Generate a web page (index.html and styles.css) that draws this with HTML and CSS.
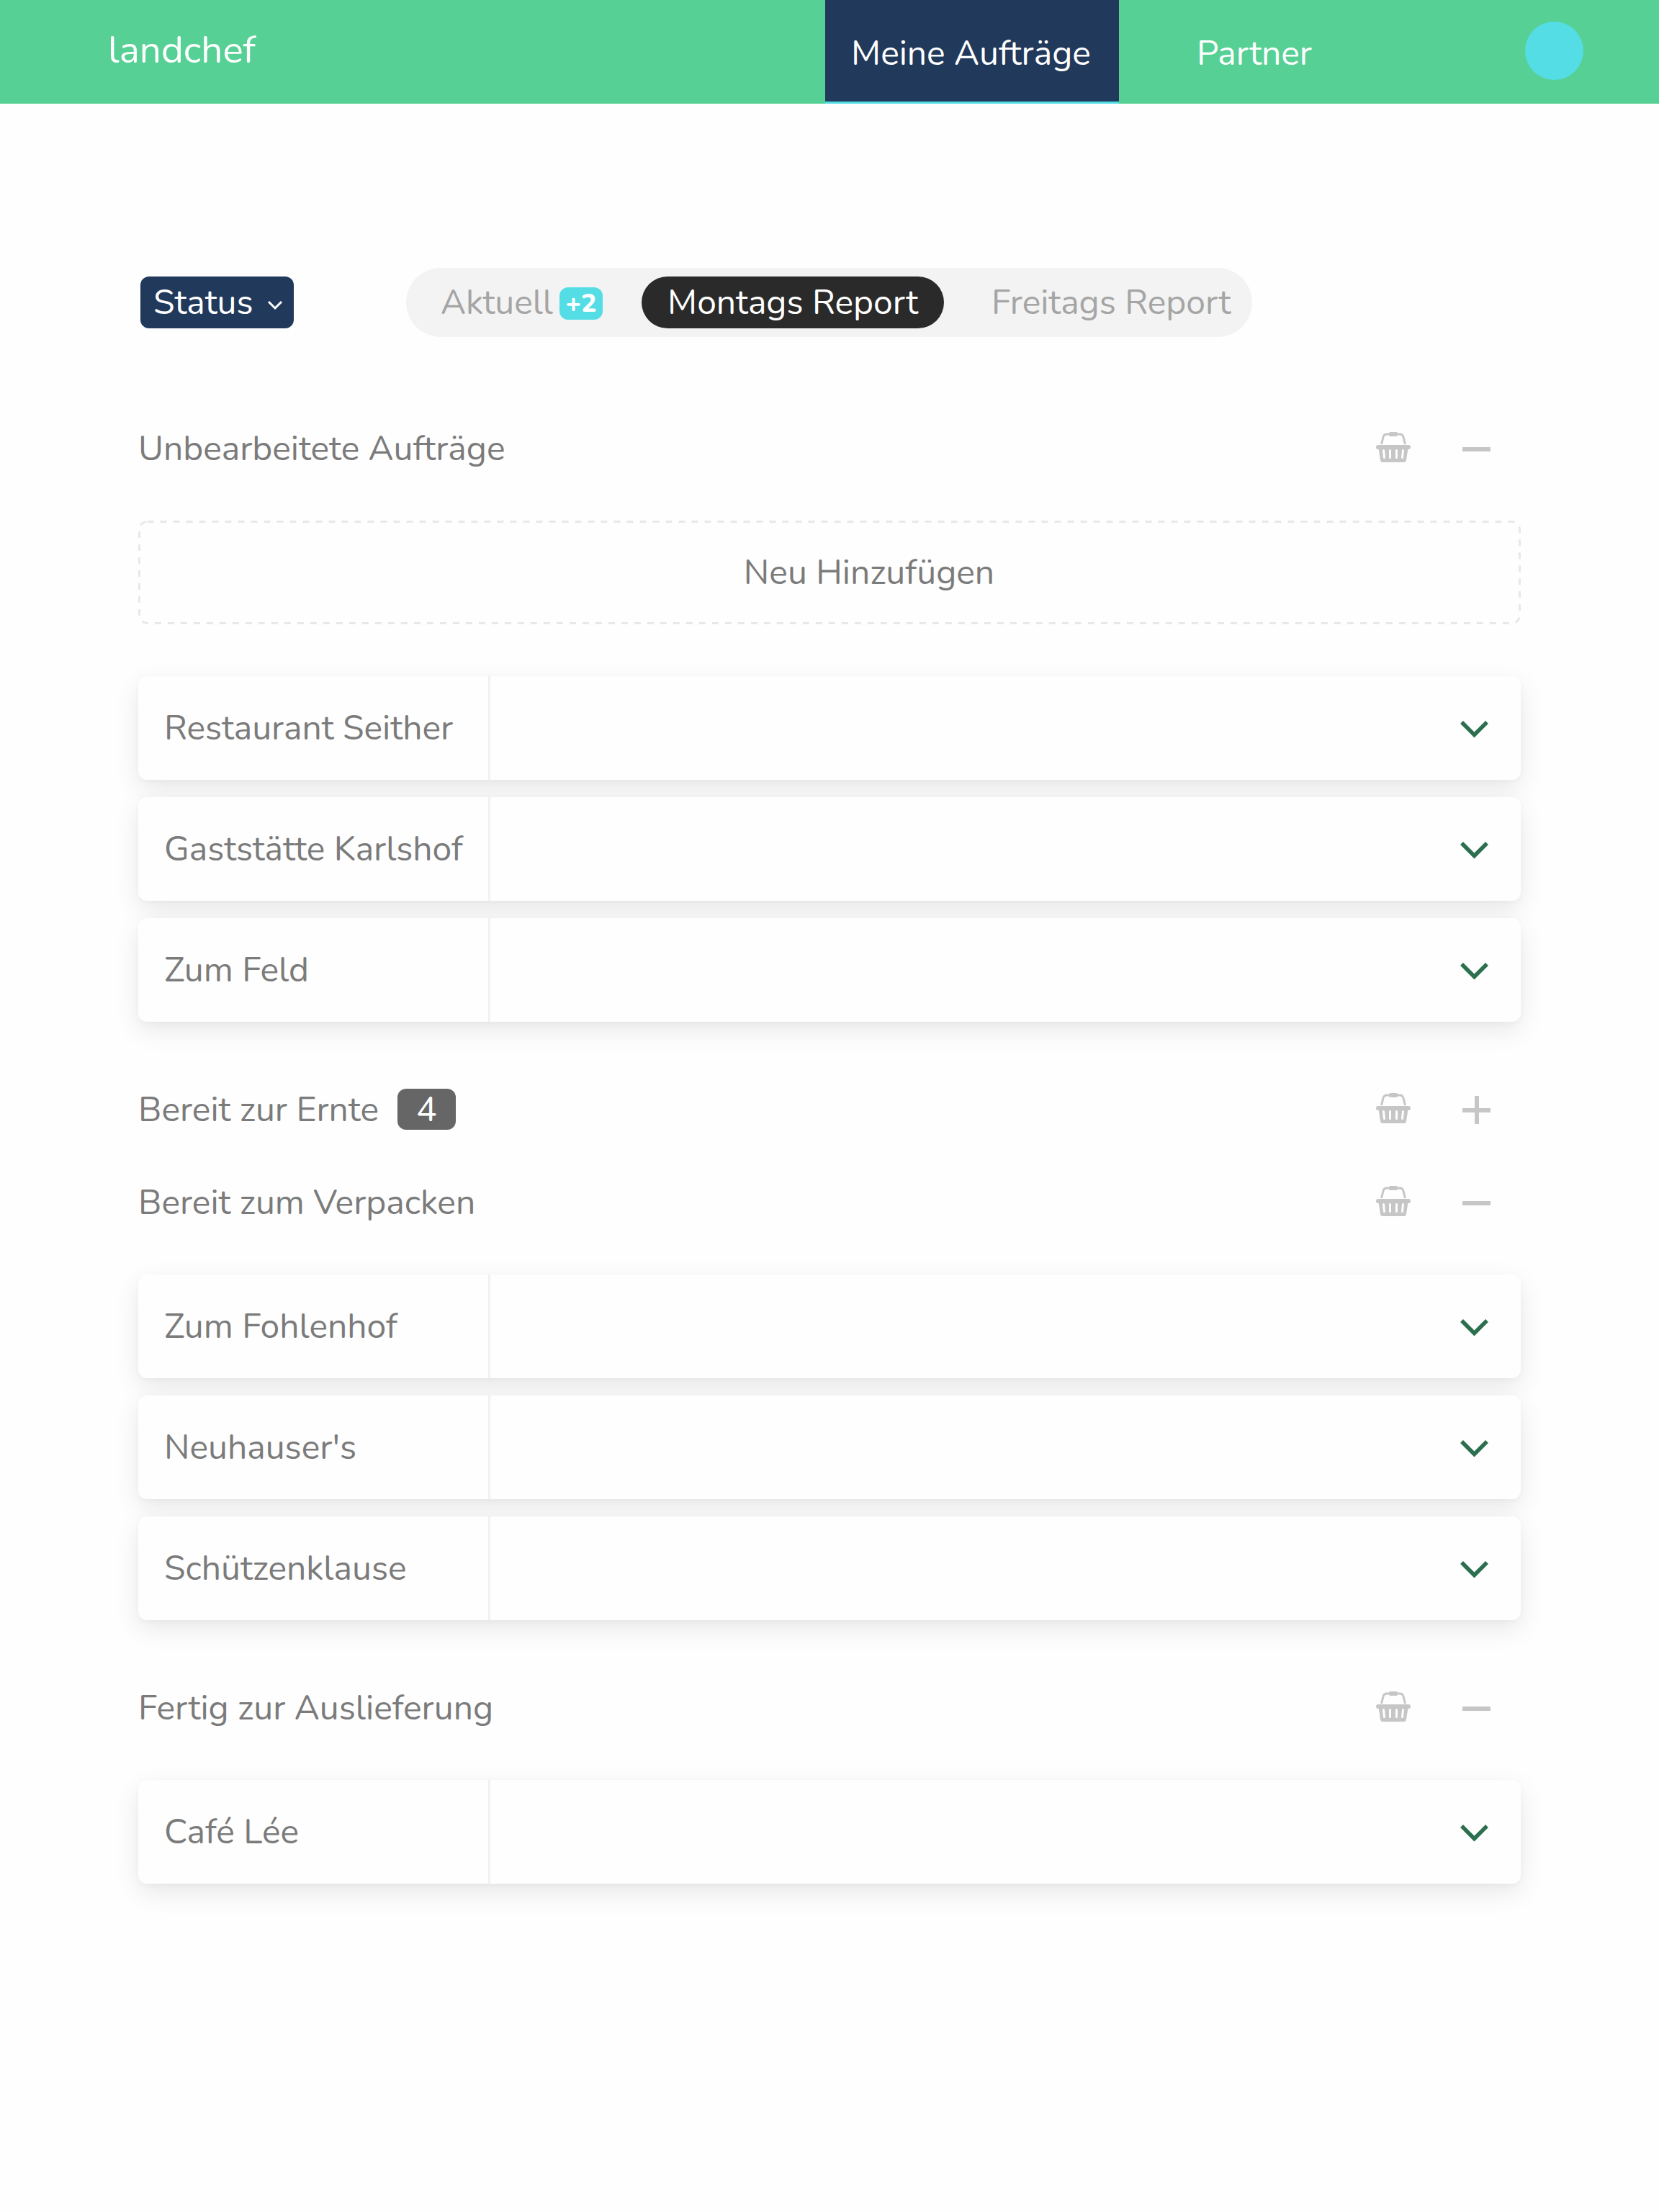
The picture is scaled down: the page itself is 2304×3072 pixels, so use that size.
FILE: index.html
```html
<!DOCTYPE html>
<html lang="de">
<head>
<meta charset="utf-8">
<meta name="viewport" content="width=device-width, initial-scale=1">
<title>landchef – Meine Aufträge</title>
<link rel="stylesheet" href="styles.css">
</head>
<body>
<svg class="sprite" aria-hidden="true">
  <symbol id="basket" viewBox="0 0 48 45">
    <path d="M7.500 17 10 7Q11 3 15 3H33Q37 3 38 7L40.500 17" fill="none" stroke="currentColor" stroke-width="3"/>
    <rect x="18" y="0" width="12" height="6" rx="2" fill="currentColor"/>
    <path fill="currentColor" fill-rule="evenodd" d="M3 18H45A3 3 0 0 1 45 24H44.300L42 39Q41.500 42 39 42H9Q6.500 42 6 39L3.700 24H3A3 3 0 0 1 3 18ZM9 25.500 10 35.500A1.500 1.500 0 0 0 13 35.500L12 25.500A1.500 1.500 0 0 0 9 25.500ZM18 25.500V35.500A1.500 1.500 0 0 0 21 35.500V25.500A1.500 1.500 0 0 0 18 25.500ZM27 25.500V35.500A1.500 1.500 0 0 0 30 35.500V25.500A1.500 1.500 0 0 0 27 25.500ZM36 25.500 35 35.500A1.500 1.500 0 0 0 38 35.500L39 25.500A1.500 1.500 0 0 0 36 25.500Z"/>
  </symbol>
  <symbol id="minus" viewBox="0 0 39 45"><path d="M0 21H39V27H0Z" fill="currentColor"/></symbol>
  <symbol id="plus" viewBox="0 0 39 45"><path d="M0 21H17V4H23V21H39V27H23V43H17V27H0Z" fill="currentColor"/></symbol>
  <symbol id="chevron" viewBox="0 0 39 24"><path d="M2 2 19.500 19.500 37 2" fill="none" stroke="currentColor" stroke-width="5.500"/></symbol>
</svg>

<header class="topbar">
  <a class="brand" href="#">landchef</a>
  <nav class="nav" aria-label="Hauptnavigation">
    <a class="nav-link is-active" href="#" aria-current="page">Meine Aufträge</a>
    <a class="nav-link" href="#">Partner</a>
  </nav>
  <button class="avatar" type="button" aria-label="Profil"></button>
</header>

<main class="page">
  <div class="toolbar">
    <div class="status">
      <select class="status-select" aria-label="Status"><option>Status</option></select>
      <svg class="status-icon" viewBox="0 0 22 14" aria-hidden="true"><path d="M2 2 11 11 20 2" fill="none" stroke="currentColor" stroke-width="3"/></svg>
    </div>
    <div class="segments">
      <button class="segment" type="button">Aktuell <span class="new-count">+2</span></button>
      <button class="segment is-selected" type="button" aria-pressed="true">Montags Report</button>
      <button class="segment" type="button">Freitags Report</button>
    </div>
  </div>

  <section class="group">
    <div class="group-head">
      <h2 class="group-title">Unbearbeitete Aufträge</h2>
      <button class="icon-button" type="button" aria-label="Korb"><svg class="basket"><use href="#basket"/></svg></button>
      <button class="icon-button" type="button" aria-label="Zuklappen"><svg class="toggle"><use href="#minus"/></svg></button>
    </div>
    <div class="group-body">
      <button class="add" type="button">
        <svg class="add-outline" aria-hidden="true"><rect class="add-rect" rx="11"/></svg>
        <span class="add-label">Neu Hinzufügen</span>
      </button>
      <ul class="orders">
        <li class="order"><span class="order-name">Restaurant Seither</span><button class="expand" type="button" aria-label="Restaurant Seither öffnen"><svg class="chevron"><use href="#chevron"/></svg></button></li>
        <li class="order"><span class="order-name">Gaststätte Karlshof</span><button class="expand" type="button" aria-label="Gaststätte Karlshof öffnen"><svg class="chevron"><use href="#chevron"/></svg></button></li>
        <li class="order"><span class="order-name">Zum Feld</span><button class="expand" type="button" aria-label="Zum Feld öffnen"><svg class="chevron"><use href="#chevron"/></svg></button></li>
      </ul>
    </div>
  </section>

  <section class="group is-collapsed">
    <div class="group-head">
      <h2 class="group-title">Bereit zur Ernte</h2>
      <span class="count">4</span>
      <button class="icon-button" type="button" aria-label="Korb"><svg class="basket"><use href="#basket"/></svg></button>
      <button class="icon-button" type="button" aria-label="Aufklappen"><svg class="toggle"><use href="#plus"/></svg></button>
    </div>
  </section>

  <section class="group">
    <div class="group-head">
      <h2 class="group-title">Bereit zum Verpacken</h2>
      <button class="icon-button" type="button" aria-label="Korb"><svg class="basket"><use href="#basket"/></svg></button>
      <button class="icon-button" type="button" aria-label="Zuklappen"><svg class="toggle"><use href="#minus"/></svg></button>
    </div>
    <div class="group-body">
      <ul class="orders">
        <li class="order"><span class="order-name">Zum Fohlenhof</span><button class="expand" type="button" aria-label="Zum Fohlenhof öffnen"><svg class="chevron"><use href="#chevron"/></svg></button></li>
        <li class="order"><span class="order-name">Neuhauser's</span><button class="expand" type="button" aria-label="Neuhauser's öffnen"><svg class="chevron"><use href="#chevron"/></svg></button></li>
        <li class="order"><span class="order-name">Schützenklause</span><button class="expand" type="button" aria-label="Schützenklause öffnen"><svg class="chevron"><use href="#chevron"/></svg></button></li>
      </ul>
    </div>
  </section>

  <section class="group">
    <div class="group-head">
      <h2 class="group-title">Fertig zur Auslieferung</h2>
      <button class="icon-button" type="button" aria-label="Korb"><svg class="basket"><use href="#basket"/></svg></button>
      <button class="icon-button" type="button" aria-label="Zuklappen"><svg class="toggle"><use href="#minus"/></svg></button>
    </div>
    <div class="group-body">
      <ul class="orders">
        <li class="order"><span class="order-name">Café Lée</span><button class="expand" type="button" aria-label="Café Lée öffnen"><svg class="chevron"><use href="#chevron"/></svg></button></li>
      </ul>
    </div>
  </section>
</main>
</body>
</html>
```
FILE: styles.css
```css
:root {
  --green: #56d094;
  --navy: #21395b;
  --cyan: #55dde6;
  --text: #7b7b7b;
  --icon: #c6c6c6;
}

* { box-sizing: border-box; }

body {
  margin: 0;
  background: #fefefe;
  color: var(--text);
  font: 400 48px/58px Nunito, Lato, sans-serif;
}

button, select {
  margin: 0;
  padding: 0;
  border: 0;
  background: none;
  color: inherit;
  font: inherit;
  cursor: pointer;
}

a { color: inherit; text-decoration: none; }

svg { display: block; }

.sprite { position: absolute; width: 0; height: 0; }

/* Top bar */
.topbar {
  display: flex;
  align-items: center;
  height: 144px;
  padding: 0 105px 0 150px;
  background: var(--green);
  color: #fff;
}

.brand { font-size: 53px; padding-bottom: 4px; }

.nav {
  display: flex;
  gap: 72px;
  align-self: stretch;
  margin-left: auto;
  margin-right: 260px;
}

.nav-link {
  display: flex;
  align-items: center;
  padding: 3px 36px 0;
}

.nav-link.is-active {
  min-width: 408px;
  background: var(--navy);
  box-shadow: inset 0 -3px var(--cyan);
}

.avatar {
  width: 81px;
  height: 81px;
  margin-bottom: 3px;
  border-radius: 50%;
  background: var(--cyan);
}

/* Filters */
.page { padding: 228px 192px; }

.toolbar {
  display: flex;
  align-items: center;
  gap: 156px;
  padding-left: 3px;
}

.status {
  display: grid;
  align-items: center;
  color: #fff;
}

.status-select {
  grid-area: 1 / 1;
  appearance: none;
  width: 213px;
  height: 72px;
  padding: 0 54px 0 18px;
  border-radius: 12px;
  background: var(--navy);
}

.status-icon {
  grid-area: 1 / 1;
  justify-self: end;
  width: 22px;
  height: 14px;
  margin-right: 15px;
  margin-top: 8px;
  pointer-events: none;
}

.segments {
  display: flex;
  align-items: center;
  gap: 18px;
  height: 96px;
  padding: 0 30px 0 12px;
  border-radius: 48px;
  background: #f3f3f3;
  color: #a5a5a5;
}

.segment {
  display: flex;
  align-items: center;
  gap: 9px;
  height: 72px;
  padding: 0 36px;
  border-radius: 36px;
}

.segment:last-child { padding: 0 0 0 48px; }

.segment.is-selected { background: #2a2a2a; color: #fff; }

.new-count {
  width: 60px;
  height: 45px;
  margin-top: 3px;
  border-radius: 12px;
  background: var(--cyan);
  color: #fff;
  font-size: 36px;
  font-weight: 800;
  line-height: 45px;
}

/* Order groups */
.group { margin-top: 93px; }

.toolbar + .group { margin-top: 126px; }

.is-collapsed + .group { margin-top: 72px; }

.group-head {
  display: flex;
  align-items: center;
  height: 57px;
  padding-right: 42px;
  color: var(--icon);
}

.group-title {
  margin: 0 auto 0 0;
  font-size: 48px;
  font-weight: 400;
  color: var(--text);
}

.group-title:has(+ .count) { margin-right: 26px; }

.count {
  width: 81px;
  height: 57px;
  margin-right: auto;
  border-radius: 12px;
  background: #666;
  color: #fff;
  text-align: center;
}

.icon-button + .icon-button { margin-left: 72px; }

.basket { width: 48px; height: 45px; }

.toggle { width: 39px; height: 45px; }

.group-body {
  display: grid;
  gap: 72px;
  margin-top: 72px;
}

.add {
  display: grid;
  width: 100%;
  height: 144px;
}

.add-outline {
  grid-area: 1 / 1;
  width: 100%;
  height: 144px;
}

.add-rect {
  x: 1.5px;
  y: 1.5px;
  width: calc(100% - 3px);
  height: 141px;
  fill: none;
  stroke: #e8e8e8;
  stroke-width: 3px;
  stroke-dasharray: 9 9;
}

.add-label {
  grid-area: 1 / 1;
  place-self: center;
  padding-left: 110px;
}

.orders {
  display: grid;
  gap: 24px;
  margin: 0;
  padding: 0;
  list-style: none;
}

.order {
  position: relative;
  display: flex;
  justify-content: space-between;
  height: 144px;
  padding-right: 45px;
  border-radius: 12px;
  background: #fefefe;
  box-shadow: 0 12px 36px rgba(0, 0, 0, .09), 0 3px 9px rgba(0, 0, 0, .03);
}

.order-name {
  display: flex;
  align-items: center;
  width: 489px;
  padding-left: 36px;
  border-right: 3px solid #f1f1f1;
  white-space: nowrap;
}

.expand { padding-top: 4px; color: #2b6f4e; }

.chevron { width: 39px; height: 24px; }
```
